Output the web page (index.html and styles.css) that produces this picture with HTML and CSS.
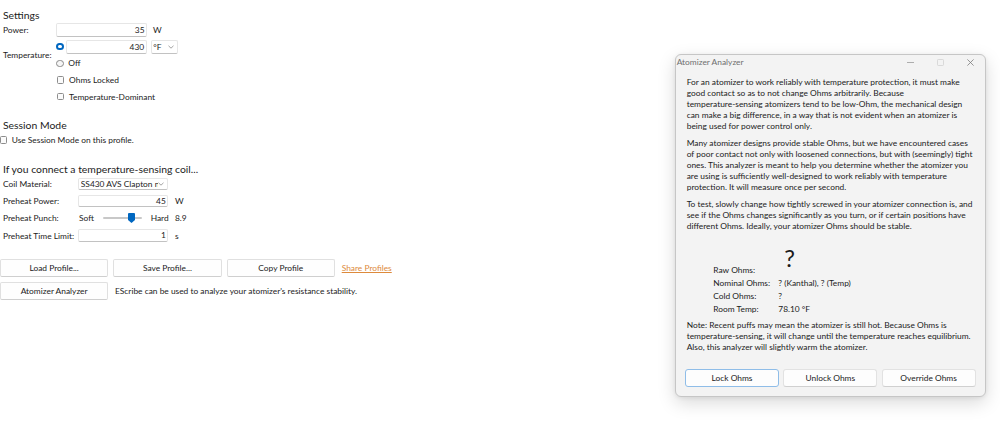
FILE: index.html
```html
<!DOCTYPE html>
<html>
<head>
<meta charset="utf-8">
<title>Settings</title>
<link rel="stylesheet" href="styles.css">
</head>
<body>
<div class="panel">
  <h2 class="heading">Settings</h2>
  <div class="form form-settings">
    <div class="label">Power:</div>
    <div class="ctl"><span class="input w91">35</span><span class="unit u1">W</span></div>
    <div class="label label-temp">Temperature:</div>
    <div class="ctl"><span class="radio on"></span><span class="input w81">430</span><span class="select sel-f"><span>°F</span><svg class="chev" viewBox="0 0 6 4" width="6" height="4"><polyline points="0.5,0.8 3,3.2 5.5,0.8"/></svg></span></div>
    <div class="ctl"><span class="radio"></span><span class="opt">Off</span></div>
    <div class="ctl col2"><span class="check"></span><span class="opt2">Ohms Locked</span></div>
    <div class="ctl col2"><span class="check"></span><span class="opt2">Temperature-Dominant</span></div>
  </div>

  <h2 class="heading h-session">Session Mode</h2>
  <div class="session-row"><span class="check"></span><span class="opt-s">Use Session Mode on this profile.</span></div>

  <h2 class="heading h-coil">If you connect a temperature-sensing coil...</h2>
  <div class="form form-coil">
    <div class="label">Coil Material:</div>
    <div class="ctl"><span class="select sel-coil"><span class="sel-text">SS430 AVS Clapton ni80</span><svg class="chev" viewBox="0 0 6 4" width="6" height="4"><polyline points="0.5,0.8 3,3.2 5.5,0.8"/></svg></span></div>
    <div class="label">Preheat Power:</div>
    <div class="ctl"><span class="input w90 small">45</span><span class="unit u2">W</span></div>
    <div class="label">Preheat Punch:</div>
    <div class="ctl"><span class="soft">Soft</span><span class="track"><svg class="thumb" viewBox="0 0 7 10" width="7" height="10"><path d="M1 0 H6 Q7 0 7 1 V7 L3.5 10 L0 7 V1 Q0 0 1 0 Z"/></svg></span><span class="hard">Hard</span><span>8.9</span></div>
    <div class="label">Preheat Time Limit:</div>
    <div class="ctl"><span class="input w90 small">1</span><span class="unit u2">s</span></div>
  </div>

  <div class="btn-row row1">
    <button class="btn">Load Profile...</button>
    <button class="btn">Save Profile...</button>
    <button class="btn">Copy Profile</button>
    <a class="link" href="#">Share Profiles</a>
  </div>
  <div class="btn-row row2">
    <button class="btn">Atomizer Analyzer</button>
    <span class="hint">EScribe can be used to analyze your atomizer's resistance stability.</span>
  </div>
</div>

<div class="dialog">
  <div class="titlebar">
    <span class="title">Atomizer Analyzer</span>
    <div class="wctl">
      <span class="wbtn"><svg viewBox="0 0 7 7" width="7" height="7"><line x1="0" y1="3.5" x2="7" y2="3.5" class="wmin"/></svg></span>
      <span class="wbtn"><svg viewBox="0 0 7 7" width="7" height="7"><rect x="0.5" y="0.5" width="6" height="6" rx="0.8" class="wmax"/></svg></span>
      <span class="wbtn"><svg viewBox="0 0 7 7" width="7" height="7"><path d="M0.4 0.4 L6.6 6.6 M6.6 0.4 L0.4 6.6" class="wclose"/></svg></span>
    </div>
  </div>
  <div class="dbody">
    <p>For an atomizer to work reliably with temperature protection, it must make<br>good contact so as to not change Ohms arbitrarily. Because<br>temperature-sensing atomizers tend to be low-Ohm, the mechanical design<br>can make a big difference, in a way that is not evident when an atomizer is<br>being used for power control only.</p>
    <p>Many atomizer designs provide stable Ohms, but we have encountered cases<br>of poor contact not only with loosened connections, but with (seemingly) tight<br>ones. This analyzer is meant to help you determine whether the atomizer you<br>are using is sufficiently well-designed to work reliably with temperature<br>protection. It will measure once per second.</p>
    <p>To test, slowly change how tightly screwed in your atomizer connection is, and<br>see if the Ohms changes significantly as you turn, or if certain positions have<br>different Ohms. Ideally, your atomizer Ohms should be stable.</p>
    <div class="ohms">
      <div class="olabel raw">Raw Ohms:</div><div class="big">?</div>
      <div class="olabel">Nominal Ohms:</div><div>? (Kanthal), ? (Temp)</div>
      <div class="olabel">Cold Ohms:</div><div>?</div>
      <div class="olabel">Room Temp:</div><div>78.10 °F</div>
    </div>
    <p class="note">Note: Recent puffs may mean the atomizer is still hot. Because Ohms is<br>temperature-sensing, it will change until the temperature reaches equilibrium.<br>Also, this analyzer will slightly warm the atomizer.</p>
    <div class="dbtns">
      <button class="dbtn default">Lock Ohms</button>
      <button class="dbtn">Unlock Ohms</button>
      <button class="dbtn">Override Ohms</button>
    </div>
  </div>
</div>
</body>
</html>
```

FILE: styles.css
```css
* { box-sizing: border-box; }
html, body { margin: 0; padding: 0; }
body {
  width: 1000px;
  height: 426px;
  background: #ffffff;
  font-family: Lato, "Open Sans", sans-serif;
  font-size: 8.4px;
  color: #1b1b1b;
  position: relative;
  overflow: hidden;
}

/* ---------- left settings panel ---------- */
.panel { padding-top: 8px; width: 440px; }
.heading {
  margin: 0;
  padding-left: 3px;
  font-size: 10.4px;
  font-weight: 400;
  line-height: 14px;
  color: #1b1b1b;
  white-space: nowrap;
}
.h-session { margin-top: 14.7px; }
.h-coil { margin-top: 15.5px; }

.form { display: grid; align-items: center; grid-auto-rows: 14px; }
.form-settings { grid-template-columns: 56px 1fr; row-gap: 2.7px; margin-top: 1px; }
.form-coil { grid-template-columns: 78.3px 1fr; row-gap: 3.2px; margin-top: 0.5px; }
.label { padding-left: 3px; line-height: 14px; white-space: nowrap; }
.label-temp { grid-row: span 2; }
.ctl { display: flex; align-items: center; height: 14px; line-height: 14px; white-space: nowrap; }
.col2 { grid-column: 2; }

.input {
  display: inline-block;
  height: 14px;
  background: #fff;
  border: 1px solid #e6e6e6;
  border-bottom-color: #c2c2c2;
  border-radius: 2px;
  text-align: right;
  padding-right: 1.5px;
  line-height: 12px;
}
.input.small { height: 12.5px; line-height: 10.5px; }
.w91 { width: 91px; }
.w81 { width: 81px; }
.w90 { width: 90px; }
.unit.u1 { margin-left: 6px; }
.unit.u2 { margin-left: 6.7px; }

.select {
  display: inline-flex;
  align-items: center;
  justify-content: space-between;
  height: 14px;
  background: #fff;
  border: 1px solid #e6e6e6;
  border-bottom-color: #c2c2c2;
  border-radius: 2px;
  padding: 0 3px 0 1.5px;
  line-height: 12px;
}
.sel-f { width: 27px; margin-left: 4px; }
.sel-coil { width: 90px; height: 12.5px; }
.sel-text { display: block; width: 77px; overflow: hidden; white-space: nowrap; }
.chev { fill: none; stroke: #8a8a8a; stroke-width: 0.8; flex: none; }

.radio {
  display: inline-block;
  width: 7.5px;
  height: 7.5px;
  border-radius: 50%;
  border: 1px solid #8a8a8a;
  background: #f6f6f6;
  flex: none;
}
.radio.on { border: 2.2px solid #0067c0; background: #fff; margin-right: 2.2px; }
.opt { margin-left: 4.8px; }

.check {
  display: inline-block;
  width: 7.4px;
  height: 7.4px;
  border: 1px solid #8d8d8d;
  border-radius: 1.5px;
  background: #fbfbfb;
  flex: none;
}
.col2 .check { margin-left: 0.7px; }
.opt2 { margin-left: 5px; }

.session-row { display: flex; align-items: center; height: 14px; margin-top: 0.5px; white-space: nowrap; }
.opt-s { margin-left: 4.3px; }

.soft { width: 24.4px; padding-left: 0.7px; }
.track {
  position: relative;
  width: 39px;
  height: 2px;
  background: #c8c8c8;
  border-radius: 1px;
}
.thumb { position: absolute; left: 25.3px; top: -4.6px; fill: #0067c0; }
.hard { width: 24.3px; margin-left: 9px; }

.btn-row { display: flex; align-items: center; white-space: nowrap; }
.row1 { margin-top: 16.7px; gap: 5px; }
.row2 { margin-top: 5px; }
.btn {
  font-family: inherit;
  font-size: 8.4px;
  color: #1b1b1b;
  width: 108.3px;
  height: 18px;
  padding: 0;
  background: #fefefe;
  border: 1px solid #e0e0e0;
  border-bottom-color: #cfcfcf;
  border-radius: 2px;
  line-height: 16px;
}
.link { color: #dd8a3c; text-decoration: underline; margin-left: 1.8px; }
.hint { margin-left: 6.7px; }

/* ---------- floating dialog window ---------- */
.dialog {
  position: absolute;
  left: 675px;
  top: 54px;
  width: 311px;
  background: #f3f3f3;
  border: 1px solid #c6c6c6;
  border-radius: 6px;
  box-shadow: 0 6px 18px rgba(0,0,0,0.15), 0 1px 4px rgba(0,0,0,0.07);
}
.titlebar { display: flex; height: 15px; align-items: center; justify-content: space-between; }
.title { padding-left: 0.7px; color: #6f6f6f; line-height: 15px; }
.wctl { display: flex; height: 15px; }
.wbtn { width: 30px; height: 15px; display: flex; align-items: center; justify-content: center; }
.wbtn svg { fill: none; }
.wmin { stroke: #9a9a9a; stroke-width: 0.8; }
.wmax { stroke: #d2d2d2; stroke-width: 0.8; }
.wclose { stroke: #7c7c7c; stroke-width: 0.8; }

.dbody { padding: 7.2px 9.4px 9px 10.7px; }
.dbody p { margin: 0 0 6px; line-height: 11px; white-space: nowrap; }
.ohms {
  display: grid;
  grid-template-columns: 65px auto;
  row-gap: 2px;
  margin: 14.8px 0 0 26.6px;
  line-height: 11px;
  white-space: nowrap;
}
.ohms .big { font-size: 24px; line-height: 22px; padding: 0 0 7.2px 6px; }
.ohms .raw { align-self: end; }
.dbody p.note { margin: 5.3px 0 0; }
.dbtns { display: flex; gap: 4.3px; margin: 15.8px 0 0 -1.7px; }
.dbtn {
  flex: 1;
  font-family: inherit;
  font-size: 8.4px;
  color: #1b1b1b;
  height: 18px;
  padding: 0;
  background: #fdfdfd;
  border: 1px solid #e2e2e2;
  border-bottom-color: #d0d0d0;
  border-radius: 3px;
  line-height: 16px;
}
.dbtn.default { border-color: #8fbde8; }
```
